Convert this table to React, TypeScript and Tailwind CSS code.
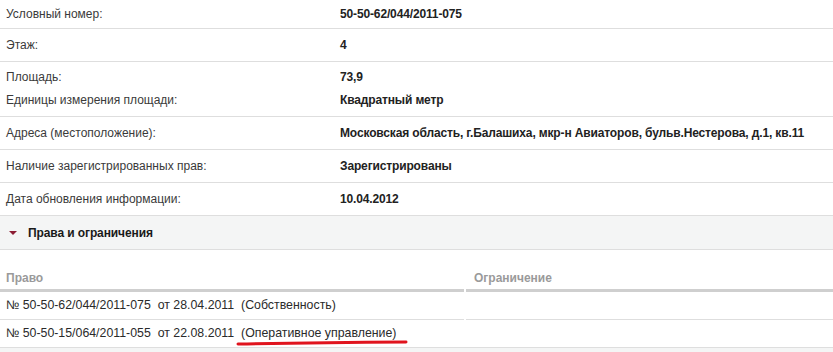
import React from "react";

const rows: { label: string[]; value: string[]; h: string }[] = [
  { label: ["Условный номер:"], value: ["50-50-62/044/2011-075"], h: "h-[29px]" },
  { label: ["Этаж:"], value: ["4"], h: "h-[33px]" },
  { label: ["Площадь:", "Единицы измерения площади:"], value: ["73,9", "Квадратный метр"], h: "h-[55px]" },
  { label: ["Адреса (местоположение):"], value: ["Московская область, г.Балашиха, мкр-н Авиаторов, бульв.Нестерова, д.1, кв.11"], h: "h-[33px]" },
  { label: ["Наличие зарегистрированных прав:"], value: ["Зарегистрированы"], h: "h-[33px]" },
  { label: ["Дата обновления информации:"], value: ["10.04.2012"], h: "h-[33px]" },
];

export default function App() {
  return (
    <div
      className="w-[833px] h-[352px] overflow-hidden bg-white text-[12px]"
      style={{ fontFamily: '"Liberation Sans", Arial, sans-serif' }}
    >
      {rows.map((r, i) => (
        <div key={i} className={`flex border-b border-[#dedede] ${r.h}`}>
          <div className="w-[340px] pl-[6px] flex flex-col justify-center text-[#3a3a3a] leading-[23px]">
            {r.label.map((l) => (
              <div key={l}>{l}</div>
            ))}
          </div>
          <div className="flex-1 flex flex-col justify-center font-bold text-[#222] leading-[23px] tracking-[-0.14px]">
            {r.value.map((v) => (
              <div key={v}>{v}</div>
            ))}
          </div>
        </div>
      ))}
      <div className="h-[34px] bg-[#f4f5f5] border-b border-[#dedede] flex items-center">
        <svg width="8" height="6" viewBox="0 0 8 6" className="ml-[9px] mr-[11px]">
          <polygon points="0,1 8,1 4,5" fill="#8c1c33" />
        </svg>
        <span className="font-bold text-[#1a1a1a] tracking-[-0.1px]">Права и ограничения</span>
      </div>
      <div className="flex h-[42px]">
        <div className="w-[464px] border-b-[3px] border-[#cfcfcf] flex items-end pb-[2px] pl-[6px] font-bold text-[#9a9a9a]">
          Право
        </div>
        <div className="w-[2px]" />
        <div className="flex-1 border-b-[3px] border-[#cfcfcf] flex items-end pb-[2px] pl-[8px] font-bold text-[#9a9a9a]">
          Ограничение
        </div>
      </div>
      <div className="flex h-[28px] text-[12.35px]">
        <div className="w-[464px] border-b border-[#dedede] flex items-center pl-[6px] text-[#2a2a2a] whitespace-pre">
          {"№ 50-50-62/044/2011-075  от 28.04.2011  (Собственность)"}
        </div>
        <div className="w-[2px]" />
        <div className="flex-1 border-b border-[#dedede]" />
      </div>
      <div className="relative flex h-[28px] border-b border-[#dedede] text-[12.35px]">
        <div className="w-[464px] flex items-center pl-[6px] text-[#2a2a2a] whitespace-pre">
          {"№ 50-50-15/064/2011-055  от 22.08.2011  (Оперативное управление)"}
        </div>
        <svg
          className="absolute left-[236px] top-[20px]"
          width="172"
          height="6"
          viewBox="0 0 172 6"
        >
          <path d="M2 4 Q 80 2.6 170 2" stroke="#e0141e" strokeWidth="3" strokeLinecap="round" fill="none" />
        </svg>
      </div>
      <div className="h-[10px] bg-[#f4f5f5]" />
    </div>
  );
}
